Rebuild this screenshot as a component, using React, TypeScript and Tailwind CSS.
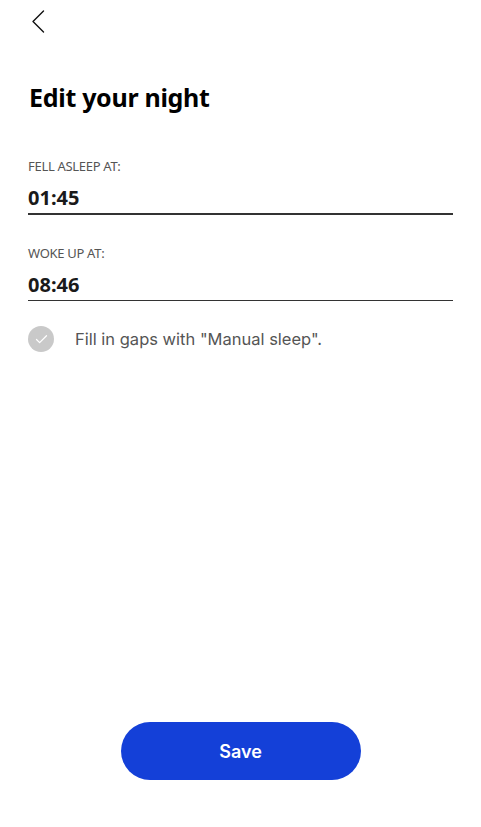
import { Check } from 'lucide-react';

function TimeField({ label, value }: { label: string; value: string }) {
  return (
    <div className="flex flex-col">
      <p className="text-[13px] leading-none uppercase text-[#555] tracking-[-0.3px]" style={{ fontFamily: '"Noto Sans", sans-serif' }}>
        {label}
      </p>
      <p className="mt-[15px] text-[20px] font-bold leading-none text-[#1a1a1a]" style={{ fontFamily: '"Noto Sans", sans-serif' }}>
        {value}
      </p>
      <div className="mt-[5px] h-[1.5px] bg-[#333]" />
    </div>
  );
}

export default function App() {
  return (
    <div className="relative flex h-[827px] w-[481px] flex-col bg-white">
      <button className="ml-[30px] mt-[9px] flex h-[24px] w-[16px] items-center justify-center text-[#111]">
        <svg width="14" height="23" viewBox="0 0 14 23" fill="none">
          <path d="M12.5 1L2 11.5L12.5 22" stroke="currentColor" strokeWidth="1.4" strokeLinecap="round" strokeLinejoin="round" />
        </svg>
      </button>

      <h1 className="ml-[29px] mt-[52px] text-[25px] font-bold leading-none tracking-[-0.3px] text-black" style={{ fontFamily: '"Noto Sans", sans-serif' }}>
        Edit your night
      </h1>

      <div className="mx-[28px] mt-[50px] flex flex-col gap-[32px]">
        <TimeField label="Fell asleep at:" value="01:45" />
        <TimeField label="Woke up at:" value="08:46" />
      </div>

      <div className="ml-[28px] mt-[25px] flex items-center gap-[21px]">
        <span className="flex h-[26px] w-[26px] items-center justify-center rounded-full bg-[#c9c9c9]">
          <Check className="h-[15px] w-[15px] text-white" strokeWidth={2} />
        </span>
        <span className="text-[16.5px] text-[#555]" style={{ fontFamily: 'Inter, sans-serif' }}>
          Fill in gaps with "Manual sleep".
        </span>
      </div>

      <div className="mt-auto mb-[47px] flex justify-center">
        <button
          className="h-[58px] w-[240px] rounded-full bg-[#1440d8] text-[18px] font-semibold text-white"
          style={{ fontFamily: 'Inter, sans-serif' }}
        >
          Save
        </button>
      </div>
    </div>
  );
}
